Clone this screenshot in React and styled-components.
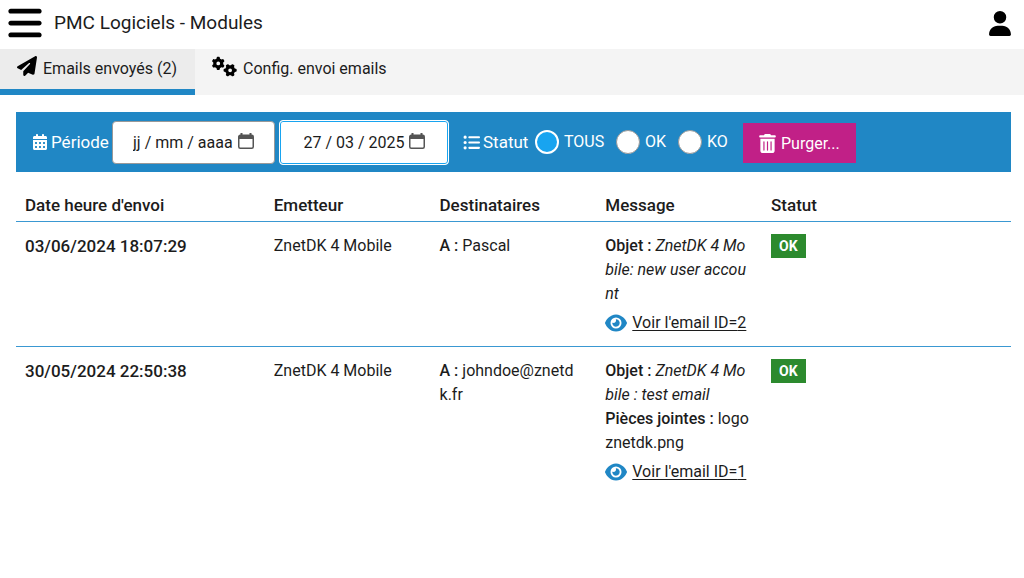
import React from 'react';
import styled, { createGlobalStyle } from 'styled-components';
import {
  FaBars,
  FaCalendarDays,
  FaEye,
  FaGears,
  FaListUl,
  FaPaperPlane,
  FaTrashCan,
  FaUser,
} from 'react-icons/fa6';

const GlobalStyle = createGlobalStyle`
  * {
    box-sizing: border-box;
  }

  body {
    margin: 0;
    background: #fff;
    color: #1c1c1c;
    font-family: Roboto, "Noto Sans", sans-serif;
    font-size: 16px;
    line-height: 24px;
  }

  button, input {
    font-family: inherit;
    font-size: inherit;
    color: inherit;
  }

  svg {
    display: block;
    flex-shrink: 0;
  }
`;

const Header = styled.header`
  display: flex;
  align-items: center;
  gap: 12px;
  height: 49px;
  padding: 0 13px 3px 8px;
`;

const IconButton = styled.button`
  display: flex;
  padding: 0;
  border: 0;
  background: none;
  color: #000;
  cursor: pointer;
`;

const Title = styled.h1`
  flex: 1;
  margin: 0;
  font-size: 19px;
  font-weight: 400;
`;

const TabBar = styled.nav`
  display: flex;
  height: 46px;
  background: #f4f4f4;
`;

const Tab = styled.a`
  display: flex;
  align-items: center;
  gap: 6px;
  padding: 0 18px 0 17px;
  border-bottom: 6px solid ${({ $active }) => ($active ? '#2087c5' : 'transparent')};
  background: ${({ $active }) => ($active ? '#ececec' : 'transparent')};
  color: inherit;
  text-decoration: none;

  svg {
    color: #000;
    margin-bottom: 6px;
  }
`;

const Main = styled.main`
  padding: 17px 13px 16px 16px;
`;

const FilterBar = styled.form`
  display: flex;
  align-items: center;
  height: 60px;
  padding: 0 16px;
  background: #2087c5;
  color: #fff;
`;

const FilterLabel = styled.span`
  display: flex;
  align-items: center;
  gap: 3px;
  width: ${({ $width }) => $width};
  font-size: 17px;
`;

const DateField = styled.div`
  display: flex;
  align-items: center;
  justify-content: center;
  gap: 3px;
  width: ${({ $width }) => $width};
  height: ${({ $focused }) => ($focused ? '45px' : '43px')};
  margin-right: 4px;
  border: 1px solid ${({ $focused }) => ($focused ? '#fff' : '#999')};
  border-radius: 4px;
  box-shadow: ${({ $focused }) => ($focused ? 'inset 0 0 0 1px #18a4f0' : 'none')};
  background: #fff;
  color: #1c1c1c;

  button {
    color: #555;
  }
`;

const DateInput = styled.input`
  width: 102px;
  padding: 0;
  border: 0;
  outline: 0;
  background: none;

  &::placeholder {
    color: #1c1c1c;
    opacity: 1;
  }
`;

const StatusGroup = styled.fieldset`
  display: flex;
  align-items: center;
  margin: 0;
  padding: 0 0 0 10px;
  border: 0;
`;

const RadioLabel = styled.label`
  display: flex;
  align-items: center;
  gap: 5px;
  width: ${({ $width }) => $width};
`;

const Radio = styled.input`
  appearance: none;
  width: 24px;
  height: 24px;
  margin: 0;
  border: 1px solid #999;
  border-radius: 50%;
  background: #fff;

  &:checked {
    border: 2px solid #fff;
    background: #18a4f0;
  }
`;

const PurgeButton = styled.button`
  display: flex;
  align-items: center;
  gap: 4px;
  height: 40px;
  margin-top: 2px;
  padding: 0 16px 0 15px;
  border: 0;
  background: #c12087;
  color: #fff;
  cursor: pointer;
`;

const MailTable = styled.table`
  width: 100%;
  margin-top: 16px;
  border-collapse: collapse;
  table-layout: fixed;
`;

const HeadCell = styled.th`
  width: ${({ $width }) => $width};
  height: 33px;
  padding: 1px 9px 0;
  border-bottom: 1px solid #3a98d2;
  font-size: 17px;
  font-weight: 500;
  text-align: left;
`;

const Row = styled.tr`
  & + & {
    border-top: 1px solid #3a98d2;
  }
`;

const Cell = styled.td`
  padding: 12px 9px 11px;
  vertical-align: top;
  white-space: pre-line;

  strong {
    font-weight: 500;
  }
`;

const SentAt = styled.strong`
  font-size: 17px;
`;

const ViewLink = styled.a`
  display: flex;
  align-items: center;
  gap: 5px;
  margin-top: 5px;
  color: inherit;
  text-underline-offset: 2px;
  white-space: nowrap;

  svg {
    color: #2087c5;
  }
`;

const Badge = styled.span`
  display: inline-block;
  padding: 0 8px;
  background: #2c8a2e;
  color: #fff;
  font-size: 14px;
  font-weight: 700;
`;

const columns = [
  { label: "Date heure d'envoi", width: '25%' },
  { label: 'Emetteur', width: '16.66%' },
  { label: 'Destinataires', width: '16.66%' },
  { label: 'Message', width: '16.66%' },
  { label: 'Statut', width: 'auto' },
];

const emails = [
  {
    id: 2,
    date: '03/06/2024 18:07:29',
    sender: 'ZnetDK 4 Mobile',
    to: 'Pascal',
    subject: 'ZnetDK 4 Mo\nbile: new user accou\nnt',
    status: 'OK',
  },
  {
    id: 1,
    date: '30/05/2024 22:50:38',
    sender: 'ZnetDK 4 Mobile',
    to: 'johndoe@znetd\nk.fr',
    subject: 'ZnetDK 4 Mo\nbile : test email',
    attachments: 'logo\nznetdk.png',
    status: 'OK',
  },
];

const CalendarGlyph = () => (
  <svg width="16" height="18" viewBox="0 0 16 18" fill="none">
    <path d="M3.5 0v4M12.5 0v4" stroke="currentColor" strokeWidth="2" />
    <rect x="0.75" y="2.25" width="14.5" height="13" rx="1.5" stroke="currentColor" strokeWidth="1.5" />
    <path d="M1 2.5h14V6H1z" fill="currentColor" />
  </svg>
);

const Filters = () => (
  <FilterBar>
    <FilterLabel $width="80px">
      <FaCalendarDays size={16} />
      Période
    </FilterLabel>
    <DateField $width="163px">
      <DateInput placeholder="jj / mm / aaaa" aria-label="Début de période" />
      <IconButton type="button" aria-label="Choisir la date de début">
        <CalendarGlyph />
      </IconButton>
    </DateField>
    <DateField $width="170px" $focused>
      <DateInput defaultValue="27 / 03 / 2025" aria-label="Fin de période" />
      <IconButton type="button" aria-label="Choisir la date de fin">
        <CalendarGlyph />
      </IconButton>
    </DateField>
    <StatusGroup aria-label="Statut">
      <FilterLabel $width="72px">
        <FaListUl size={17} />
        Statut
      </FilterLabel>
      <RadioLabel $width="81px">
        <Radio type="radio" name="status" value="all" defaultChecked />
        TOUS
      </RadioLabel>
      <RadioLabel $width="62px">
        <Radio type="radio" name="status" value="ok" />
        OK
      </RadioLabel>
      <RadioLabel $width="65px">
        <Radio type="radio" name="status" value="ko" />
        KO
      </RadioLabel>
    </StatusGroup>
    <PurgeButton type="button">
      <FaTrashCan size={19} />
      Purger...
    </PurgeButton>
  </FilterBar>
);

const EmailRow = ({ email }) => (
  <Row>
    <Cell><SentAt>{email.date}</SentAt></Cell>
    <Cell>{email.sender}</Cell>
    <Cell><strong>A :</strong> {email.to}</Cell>
    <Cell>
      <div><strong>Objet :</strong> <em>{email.subject}</em></div>
      {email.attachments && (
        <div><strong>Pièces jointes :</strong> {email.attachments}</div>
      )}
      <ViewLink href={`#email-${email.id}`}>
        <FaEye size={22} />
        <span>Voir l'email ID={email.id}</span>
      </ViewLink>
    </Cell>
    <Cell><Badge>{email.status}</Badge></Cell>
  </Row>
);

const App = () => {
  return (
    <>
      <GlobalStyle />
      <Header>
        <IconButton type="button" aria-label="Menu">
          <FaBars size={38} style={{ width: 34 }} />
        </IconButton>
        <Title>PMC Logiciels - Modules</Title>
        <IconButton type="button" aria-label="Utilisateur">
          <FaUser size={25} style={{ width: 22 }} />
        </IconButton>
      </Header>
      <TabBar>
        <Tab href="#emails" $active>
          <FaPaperPlane size={20} />
          Emails envoyés (2)
        </Tab>
        <Tab href="#config">
          <FaGears size={25} />
          Config. envoi emails
        </Tab>
      </TabBar>
      <Main>
        <Filters />
        <MailTable>
          <thead>
            <tr>
              {columns.map((column) => (
                <HeadCell key={column.label} $width={column.width}>{column.label}</HeadCell>
              ))}
            </tr>
          </thead>
          <tbody>
            {emails.map((email) => (
              <EmailRow key={email.id} email={email} />
            ))}
          </tbody>
        </MailTable>
      </Main>
    </>
  );
};

export default App;
